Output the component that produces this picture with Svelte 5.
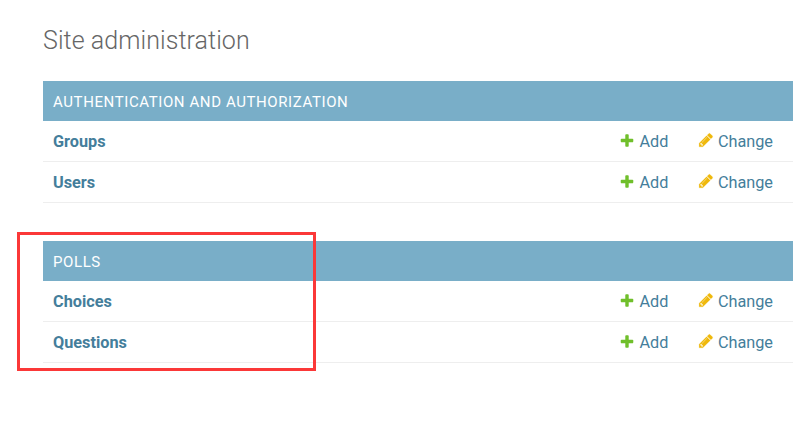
<script>
  const apps = [
    { name: 'Authentication and Authorization', models: ['Groups', 'Users'] },
    { name: 'Polls', models: ['Choices', 'Questions'], marked: true }
  ];
</script>

<main>
  <h1>Site administration</h1>
  {#each apps as app}
    <section>
      <h2>{app.name}</h2>
      {#each app.models as model}
        <div class="row">
          <a class="model" href="#model">{model}</a>
          <a class="add" href="#add">
            <svg viewBox="0 0 1792 1792"><path fill="#70bf2b" d="M1600 736v192q0 40-28 68t-68 28h-416v416q0 40-28 68t-68 28h-192q-40 0-68-28t-28-68v-416h-416q-40 0-68-28t-28-68v-192q0-40 28-68t68-28h416v-416q0-40 28-68t68-28h192q40 0 68 28t28 68v416h416q40 0 68 28t28 68z" /></svg>
            <span>Add</span>
          </a>
          <a class="change" href="#change">
            <svg viewBox="0 0 1792 1792"><path fill="#efb80b" stroke="#efb80b" stroke-width="20" d="M491 1536l91-91-235-235-91 91v107h128v128h107zm523-928q0-22-22-22-10 0-17 7l-542 542q-7 7-7 17 0 22 22 22 10 0 17-7l542-542q7-7 7-17zm-54-192l416 416-832 832h-416v-416zm683 96q0 53-37 90l-166 166-416-416 166-165q36-38 90-38 53 0 91 38l235 234q37 39 37 91z" /></svg>
            <span>Change</span>
          </a>
        </div>
      {/each}
      {#if app.marked}
        <div class="marker"></div>
      {/if}
    </section>
  {/each}
</main>

<style>
  :global(body) {
    background: #fff;
  }
  main {
    box-sizing: border-box;
    height: 429px;
    padding: 26px 16px 0 43px;
    font-family: Roboto, "Liberation Sans", sans-serif;
    font-size: 16.25px;
  }
  h1 {
    margin: 0 0 25px;
    font-size: 25px;
    line-height: 30px;
    font-weight: 300;
    letter-spacing: 0.07px;
    color: #666;
  }
  section {
    position: relative;
    margin-bottom: 38px;
  }
  h2 {
    box-sizing: border-box;
    margin: 0;
    padding: 1px 10px 0;
    height: 40px;
    line-height: 41px;
    font-size: 15px;
    font-weight: 400;
    letter-spacing: 0.6px;
    text-transform: uppercase;
    color: #fff;
    background: #79aec8;
  }
  .row {
    display: flex;
    align-items: center;
    box-sizing: border-box;
    height: 41px;
    padding: 2px 20px 0 10px;
    border-bottom: 1px solid #eee;
    line-height: 20px;
  }
  a {
    display: flex;
    color: #447e9b;
    text-decoration: none;
  }
  .model {
    flex: 1;
    font-weight: 700;
  }
  .add {
    margin-right: 29.5px;
  }
  svg {
    width: 16px;
    height: 16px;
    margin: 1px 4px 0 0;
  }
  .change svg {
    margin-top: 0.4px;
  }
  .marker {
    position: absolute;
    left: -26px;
    top: -9px;
    box-sizing: border-box;
    width: 299px;
    height: 139px;
    border: 3px solid #fb3838;
  }
</style>
